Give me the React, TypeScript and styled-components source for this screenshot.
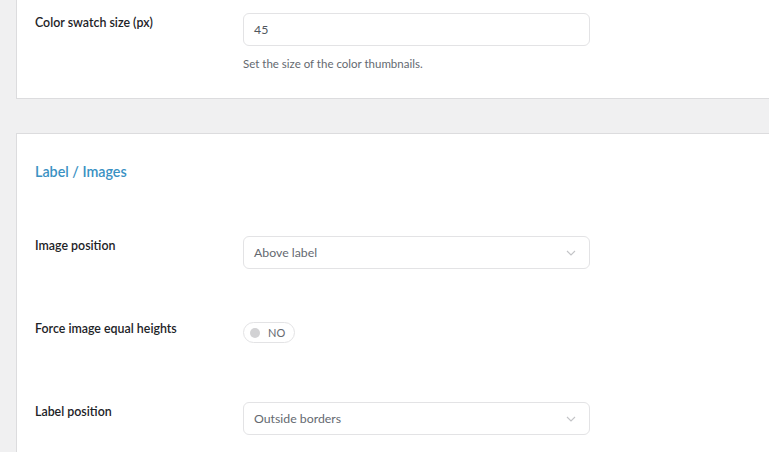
import { createGlobalStyle } from "styled-components";
import styled from "styled-components";

const GlobalStyle = createGlobalStyle`
  html, body {
    margin: 0;
    padding: 0;
    background: #f0f0f1;
    font-family: Lato, "Open Sans", sans-serif;
    color: #1d2327;
  }
`;

const Page = styled.div`
  padding-left: 16px;
  overflow: hidden;
  height: 452px;
`;

const Card = styled.section<{ $first?: boolean }>`
  background: #fff;
  border: 1px solid #dcdcde;
  border-right: none;
  border-top: ${(p) => (p.$first ? "none" : "1px solid #dcdcde")};
  margin-bottom: 34px;
  padding: ${(p) => (p.$first ? "13px 0 26px 18px" : "28px 0 0 18px")};
`;

const SectionTitle = styled.h2`
  margin: 0 0 29px;
  font-size: 14.3px;
  line-height: 20px;
  font-weight: 600;
  color: #3a91c3;
`;

const Row = styled.div<{ $pad?: number }>`
  display: grid;
  grid-template-columns: 208px 347px;
  align-items: start;
  padding: ${(p) => (p.$pad ?? 25)}px 0;
`;

const Label = styled.div`
  font-size: 12.4px;
  line-height: 18px;
  font-weight: 600;
  padding-top: 1px;
`;

const Field = styled.div`
  min-height: 33px;
`;

const TextInput = styled.div`
  box-sizing: border-box;
  height: 33px;
  border: 1px solid #e3e3e5;
  border-radius: 6px;
  padding: 0 10px;
  display: flex;
  align-items: center;
  font-size: 12.3px;
  color: #50575e;
`;

const Select = styled(TextInput)`
  justify-content: space-between;
  color: #646970;
  padding-right: 13px;
`;

const Chevron = () => (
  <svg width="10" height="6" viewBox="0 0 10 6" fill="none">
    <path d="M1 1l4 4 4-4" stroke="#c3c4c7" strokeWidth="1.1" />
  </svg>
);

const Help = styled.p`
  margin: 9px 0 0;
  font-size: 11.5px;
  line-height: 17px;
  color: #646970;
`;

const Toggle = styled.div`
  box-sizing: border-box;
  margin-top: 3px;
  width: 52px;
  height: 21px;
  border: 1px solid #e3e3e5;
  border-radius: 11px;
  display: flex;
  align-items: center;
  gap: 8px;
  padding-left: 6px;
  font-size: 11px;
  color: #646970;
`;

const Knob = styled.span`
  width: 10px;
  height: 10px;
  border-radius: 50%;
  background: #d2d2d4;
`;

export default function App() {
  return (
    <>
      <GlobalStyle />
      <Page>
        <Card $first>
          <Row $pad={0}>
            <Label>Color swatch size (px)</Label>
            <Field>
              <TextInput>45</TextInput>
              <Help>Set the size of the color thumbnails.</Help>
            </Field>
          </Row>
        </Card>
        <Card>
          <SectionTitle>Label / Images</SectionTitle>
          <Row>
            <Label>Image position</Label>
            <Field>
              <Select>
                Above label
                <Chevron />
              </Select>
            </Field>
          </Row>
          <Row>
            <Label>Force image equal heights</Label>
            <Field>
              <Toggle>
                <Knob />
                NO
              </Toggle>
            </Field>
          </Row>
          <Row>
            <Label>Label position</Label>
            <Field>
              <Select>
                Outside borders
                <Chevron />
              </Select>
            </Field>
          </Row>
        </Card>
      </Page>
    </>
  );
}
